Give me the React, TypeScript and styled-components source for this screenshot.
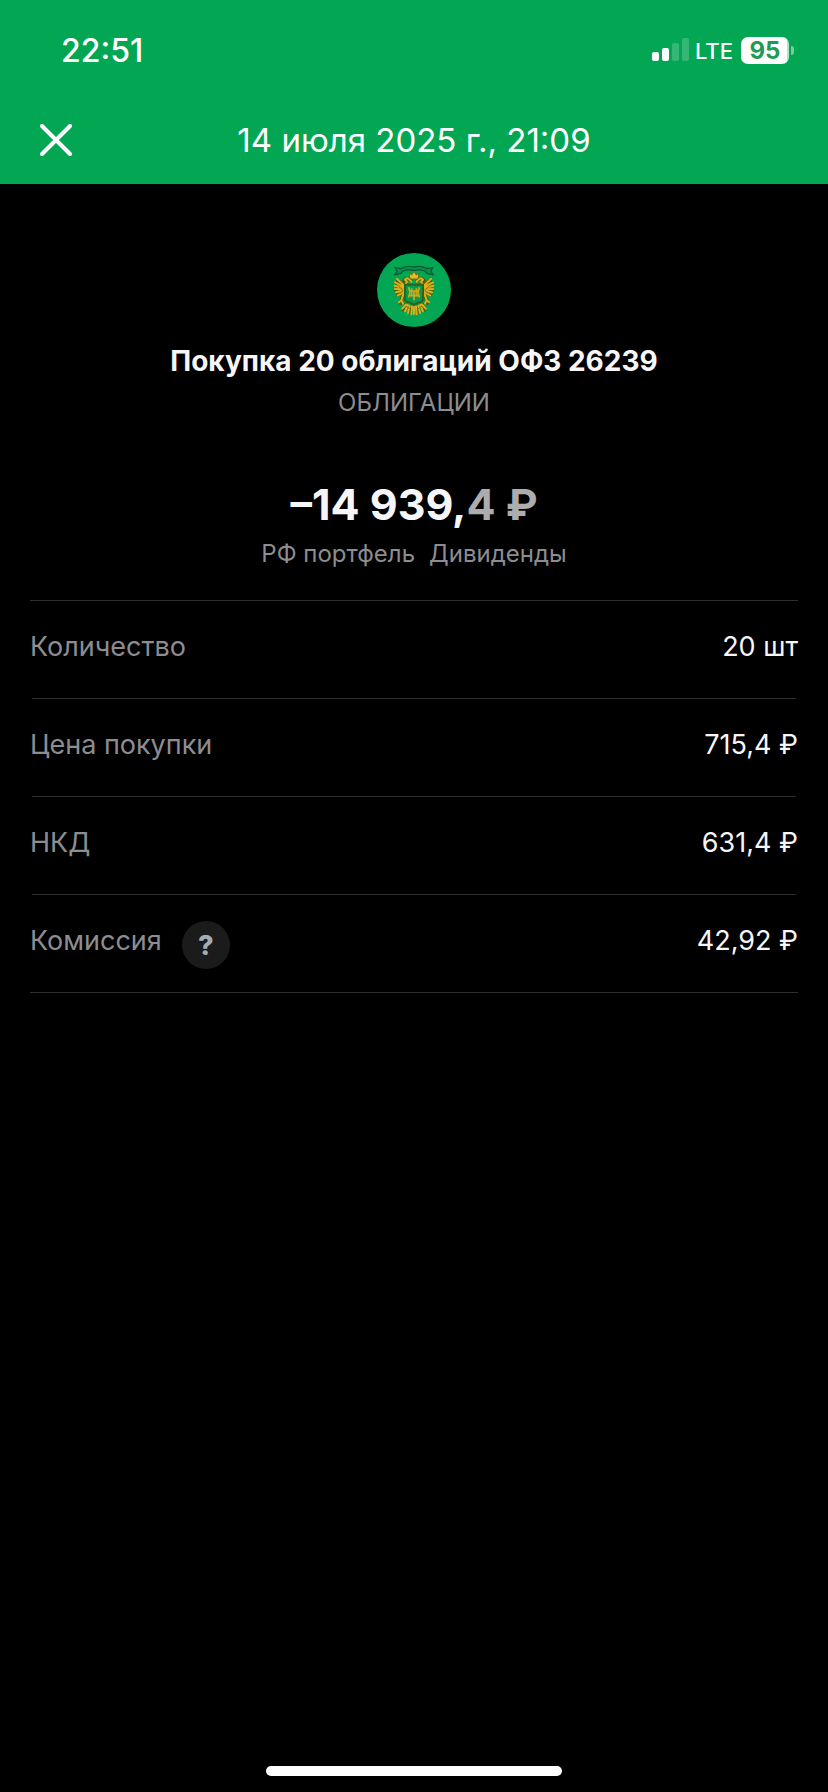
import React, { FC } from 'react';
import styled, { createGlobalStyle } from 'styled-components';

const Color = {
  background: '#000000',
  green: '#02a653',
  text: '#f6f6f8',
  muted: '#8d8d91',
  faded: '#adadaf',
  divider: '#303032',
  help: '#1b1b1c',
};

const GlobalStyle = createGlobalStyle`
  * {
    box-sizing: border-box;
  }

  body {
    margin: 0;
    background-color: ${Color.background};
    font-family: Inter, 'Liberation Sans', sans-serif;
  }
`;

const Page = styled.div`
  display: flex;
  flex-direction: column;
  min-height: 100vh;
  color: ${Color.text};
  background-color: ${Color.background};
`;

const Header = styled.header`
  color: white;
  background-color: ${Color.green};
`;

const StatusBar = styled.div`
  display: flex;
  align-items: center;
  justify-content: space-between;
  height: 96px;
  padding: 4px 34px 0 61px;
`;

const Time = styled.time`
  font-size: 32px;
  font-weight: 500;
`;

const StatusIcons = styled.div`
  display: flex;
  align-items: center;
`;

const Network = styled.span`
  margin: 2px 8px 0 6px;
  font-size: 22px;
  font-weight: 500;
  line-height: 28px;
`;

const Battery = styled.div`
  width: 48px;
  border-radius: 7px;
  color: #1f9a55;
  background: linear-gradient(to right, white 46px, #b5e3c9 46px);
  font-size: 24px;
  font-weight: 700;
  line-height: 27px;
  text-align: center;
`;

const BatteryTip = styled.div`
  width: 3px;
  height: 9px;
  margin-left: 2px;
  border-radius: 0 4px 4px 0;
  background-color: #79cda0;
`;

const NavBar = styled.div`
  display: grid;
  grid-template-columns: 48px 1fr 48px;
  align-items: center;
  height: 88px;
  padding: 0 32px;
`;

const CloseButton = styled.button`
  display: flex;
  align-items: center;
  height: 48px;
  padding: 0 8px;
  border: none;
  color: inherit;
  background: none;
`;

const NavTitle = styled.h1`
  margin: 0;
  font-size: 33px;
  font-weight: 400;
  line-height: 40px;
  text-align: center;
`;

const Content = styled.main`
  flex: 1;
  padding: 69px 30px 0;
`;

const Summary = styled.section`
  display: flex;
  flex-direction: column;
  align-items: center;
  text-align: center;
`;

const Name = styled.h2`
  margin: 14px 0 0;
  font-size: 28px;
  font-weight: 700;
  line-height: 40px;
`;

const Caption = styled.p`
  display: flex;
  gap: 14px;
  margin: 2px 0 0;
  color: ${Color.muted};
  font-size: 24px;
  line-height: 40px;
`;

const Amount = styled.p`
  margin: 53px 0 0;
  font-size: 43px;
  font-weight: 700;
  line-height: 56px;
`;

const Fraction = styled.span`
  color: ${Color.faded};
`;

const Details = styled.dl`
  margin: 26px 0 0;
  border-bottom: 1px solid ${Color.divider};
`;

const Row = styled.div`
  display: grid;
  grid-template-columns: 1fr auto;
  grid-template-rows: 1px auto;
  row-gap: 26px;
  min-height: 98px;
  font-size: 27px;
  line-height: 40px;

  &::before {
    content: '';
    grid-column: 1 / -1;
    margin: 0 2px;
    background-color: ${Color.divider};
  }

  &:first-child::before {
    margin: 0;
  }
`;

const Label = styled.dt`
  display: flex;
  gap: 20px;
  color: ${Color.muted};
`;

const Value = styled.dd`
  margin: 0;
`;

const HelpButton = styled.button`
  width: 48px;
  height: 48px;
  padding: 0;
  border: none;
  border-radius: 50%;
  color: #a3abb5;
  background-color: ${Color.help};
  font-family: inherit;
  font-size: 27px;
  font-weight: 800;
`;

const HomeIndicator = styled.div`
  align-self: center;
  width: 296px;
  height: 10px;
  margin-bottom: 16px;
  border-radius: 5px;
  background-color: white;
`;

const details = [
  { label: 'Количество', value: '20 шт' },
  { label: 'Цена покупки', value: '715,4 ₽' },
  { label: 'НКД', value: '631,4 ₽' },
  { label: 'Комиссия', value: '42,92 ₽', help: true },
];

const SignalIcon: FC = () => (
  <svg width="37" height="24" viewBox="0 0 37 24" fill="white">
    <rect x="0" y="14" width="7" height="9" rx="2" />
    <rect x="10" y="10" width="7" height="13" rx="2" />
    <rect x="20" y="5" width="7" height="18" rx="2" opacity="0.2" />
    <rect x="30" y="0" width="7" height="23" rx="2" opacity="0.2" />
  </svg>
);

const CloseIcon: FC = () => (
  <svg width="32" height="32" viewBox="0 0 32 32">
    <path
      d="M2 2 L30 30 M30 2 L2 30"
      stroke="currentColor"
      strokeWidth="4"
      strokeLinecap="round"
    />
  </svg>
);

// One half of the eagle, the other one is mirrored
const EagleHalf: FC = () => (
  <g strokeLinecap="round" strokeLinejoin="round">
    <g fill="none" stroke="#4a5c10" strokeWidth="11">
      <path d="M101 82 Q90 72 82 82 L88 90 L76 100" />
      <path d="M78 92 L62 84 M76 102 L58 98 M76 110 L57 112 M76 118 L62 125" />
      <path d="M78 128 L70 150 M86 154 L80 170 M104 160 L98 178" />
    </g>
    <g fill="none" stroke="#dfae1a" strokeWidth="6">
      <path d="M103 86 Q92 70 84 80 L90 87 L80 100" />
      <path d="M80 96 L60 78 M79 101 L54 88 M78 105 L53 98" />
      <path d="M78 109 L54 108 M78 113 L57 118 M80 118 L62 127" />
      <path d="M79 124 L73 142 M73 142 L66 148 M73 142 L78 152" />
      <path d="M87 154 L76 167 M92 156 L84 175 M98 158 L93 181" />
      <path d="M105 160 L103 184" />
    </g>
    <path
      d="M72 82 L80 92 M66 101 L76 109 M70 120 L77 114 M88 160 L98 167"
      stroke="#876a0d"
      strokeWidth="3"
    />
  </g>
);

const CoatOfArms: FC = () => (
  <svg
    width="74"
    height="74"
    viewBox="0 0 222 222"
    role="img"
    aria-label="ОФЗ 26239"
  >
    <circle cx="111" cy="111" r="111" fill={Color.green} />
    <EagleHalf />
    <g transform="translate(222 0) scale(-1 1)">
      <EagleHalf />
    </g>
    <path
      d="M55 44 L72 47 Q90 36 111 42 Q132 36 150 47 L167 44 L162 55 L168 65 L151 62 L144 54 Q128 48 111 53 Q94 48 78 54 L70 62 L54 65 L60 55 Z"
      fill="#0b8f49"
      stroke="#075c35"
      strokeWidth="4"
    />
    <path
      d="M99 78 L96 60 L104 66 L111 55 L118 66 L126 60 L123 78 Z"
      fill="#e8bb24"
      stroke="#6f6d10"
      strokeWidth="3"
    />
    <path
      d="M84 95 H138 V137 Q138 146 126 148 L111 155 L96 148 Q84 146 84 137 Z"
      fill="#079c4c"
      stroke="#2a6420"
      strokeWidth="6"
    />
    <g fill="none" stroke="#cfa91d" strokeWidth="5">
      <path d="M95 103 L99 117 L95 133 M127 103 L123 117 L127 133" />
      <path d="M104 106 V130 M118 106 V130 M111 113 V142" />
      <path d="M96 114 H126 M98 128 H124" />
    </g>
    <path d="M111 160 V185" stroke="#e8bb24" strokeWidth="5" />
  </svg>
);

const App: FC = () => (
  <>
    <GlobalStyle />
    <Page>
      <Header>
        <StatusBar>
          <Time>22:51</Time>
          <StatusIcons>
            <SignalIcon />
            <Network>LTE</Network>
            <Battery>95</Battery>
            <BatteryTip />
          </StatusIcons>
        </StatusBar>
        <NavBar>
          <CloseButton type="button" aria-label="Закрыть">
            <CloseIcon />
          </CloseButton>
          <NavTitle>14 июля 2025 г., 21:09</NavTitle>
        </NavBar>
      </Header>
      <Content>
        <Summary>
          <CoatOfArms />
          <Name>Покупка 20 облигаций ОФЗ 26239</Name>
          <Caption>ОБЛИГАЦИИ</Caption>
          <Amount>
            –14 939,<Fraction>4 ₽</Fraction>
          </Amount>
          <Caption>
            <span>РФ портфель</span>
            <span>Дивиденды</span>
          </Caption>
        </Summary>
        <Details>
          {details.map(({ label, value, help }) => (
            <Row key={label}>
              <Label>
                {label}
                {help && (
                  <HelpButton type="button" aria-label="О комиссии">
                    ?
                  </HelpButton>
                )}
              </Label>
              <Value>{value}</Value>
            </Row>
          ))}
        </Details>
      </Content>
      <HomeIndicator />
    </Page>
  </>
);

export default App;
